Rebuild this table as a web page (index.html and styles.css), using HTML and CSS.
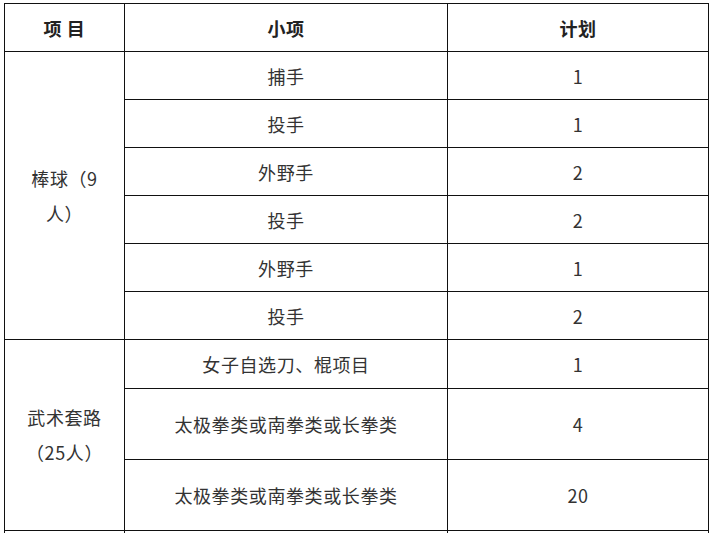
FILE: index.html
```html
<!DOCTYPE html>
<html lang="zh">
<head>
<meta charset="utf-8">
<link rel="stylesheet" href="styles.css">
</head>
<body>
<table class="plan">
  <colgroup>
    <col class="c1"><col class="c2"><col class="c3">
  </colgroup>
  <thead>
    <tr class="r-head"><th>项 目</th><th>小项</th><th>计划</th></tr>
  </thead>
  <tbody>
    <tr class="r48"><td rowspan="6" class="group">棒球（9<br>人）</td><td>捕手</td><td>1</td></tr>
    <tr class="r48"><td>投手</td><td>1</td></tr>
    <tr class="r48"><td>外野手</td><td>2</td></tr>
    <tr class="r48"><td>投手</td><td>2</td></tr>
    <tr class="r48"><td>外野手</td><td>1</td></tr>
    <tr class="r48"><td>投手</td><td>2</td></tr>
    <tr class="r49"><td rowspan="3" class="group">武术套路<br>（25人）</td><td>女子自选刀、棍项目</td><td>1</td></tr>
    <tr class="r71"><td>太极拳类或南拳类或长拳类</td><td>4</td></tr>
    <tr class="r71"><td>太极拳类或南拳类或长拳类</td><td>20</td></tr>
    <tr class="r-tail"><td></td><td></td><td></td></tr>
  </tbody>
</table>
</body>
</html>
```
FILE: styles.css
```css
html, body {
  margin: 0;
  padding: 0;
  background: #ffffff;
}
body {
  padding: 3px 0 0 4px;
  font-family: "Noto Sans CJK SC", "Noto Sans", sans-serif;
  color: #333333;
}
.plan {
  border-collapse: collapse;
  table-layout: fixed;
  width: 704px;
}
.c1 { width: 120px; }
.c2 { width: 323px; }
.c3 { width: 261px; }
.plan th,
.plan td {
  border: 1px solid #111111;
  text-align: center;
  vertical-align: middle;
  padding: 0 8px;
  font-size: 18px;
  letter-spacing: 0.6px;
  line-height: 24px;
  font-weight: normal;
}
.plan th {
  font-weight: bold;
  color: #222222;
}
.plan td.group {
  line-height: 35px;
}
.r-head { height: 48px; }
.r48 { height: 48px; }
.r49 { height: 49px; }
.r71 { height: 71px; }
.r-tail { height: 2px; }
.r-tail td {
  padding: 0;
  font-size: 0;
  line-height: 0;
  border-bottom: none;
}
```
